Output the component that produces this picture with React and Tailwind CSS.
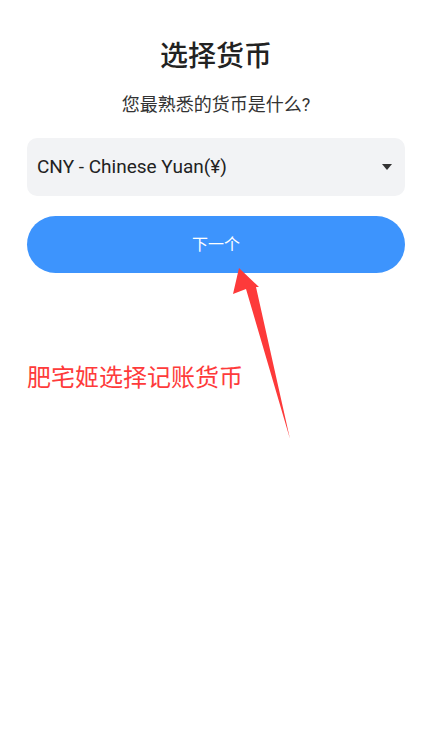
export default function App() {
  const cjk = { fontFamily: 'Roboto, "Noto Sans CJK SC", sans-serif' };
  return (
    <div className="relative w-[425px] h-[741px] bg-white overflow-hidden" style={cjk}>
      <div className="flex flex-col items-center pl-[27px] pr-[20px] pt-[39px]">
        <h1 className="text-[28px] leading-[36px] font-medium text-[#222]">选择货币</h1>
        <p className="mt-[18px] text-[18px] leading-[24px] text-[#333]">您最熟悉的货币是什么?</p>
        <div className="mt-[21px] w-full h-[58px] rounded-[10px] bg-[#f2f3f5] flex items-center justify-between pl-[10px] pr-[13px]">
          <span className="text-[19px] text-[#222]">CNY - Chinese Yuan(¥)</span>
          <svg width="10" height="6" viewBox="0 0 10 6"><path d="M0 0H10L5 6Z" fill="#333" /></svg>
        </div>
        <button className="mt-[20px] w-full h-[57px] rounded-full bg-[#3d94fd] text-white text-[16px]">下一个</button>
        <p className="self-start mt-[89px] text-[24px] leading-[32px] text-[#fe3b3b]">肥宅姬选择记账货币</p>
      </div>
      <svg className="absolute left-0 top-0 pointer-events-none" width="425" height="741">
        <path d="M239 268 L233 294 L246 289 L290 439 L256 287 L259 287 Z" fill="#fd3a3a" />
      </svg>
    </div>
  );
}
